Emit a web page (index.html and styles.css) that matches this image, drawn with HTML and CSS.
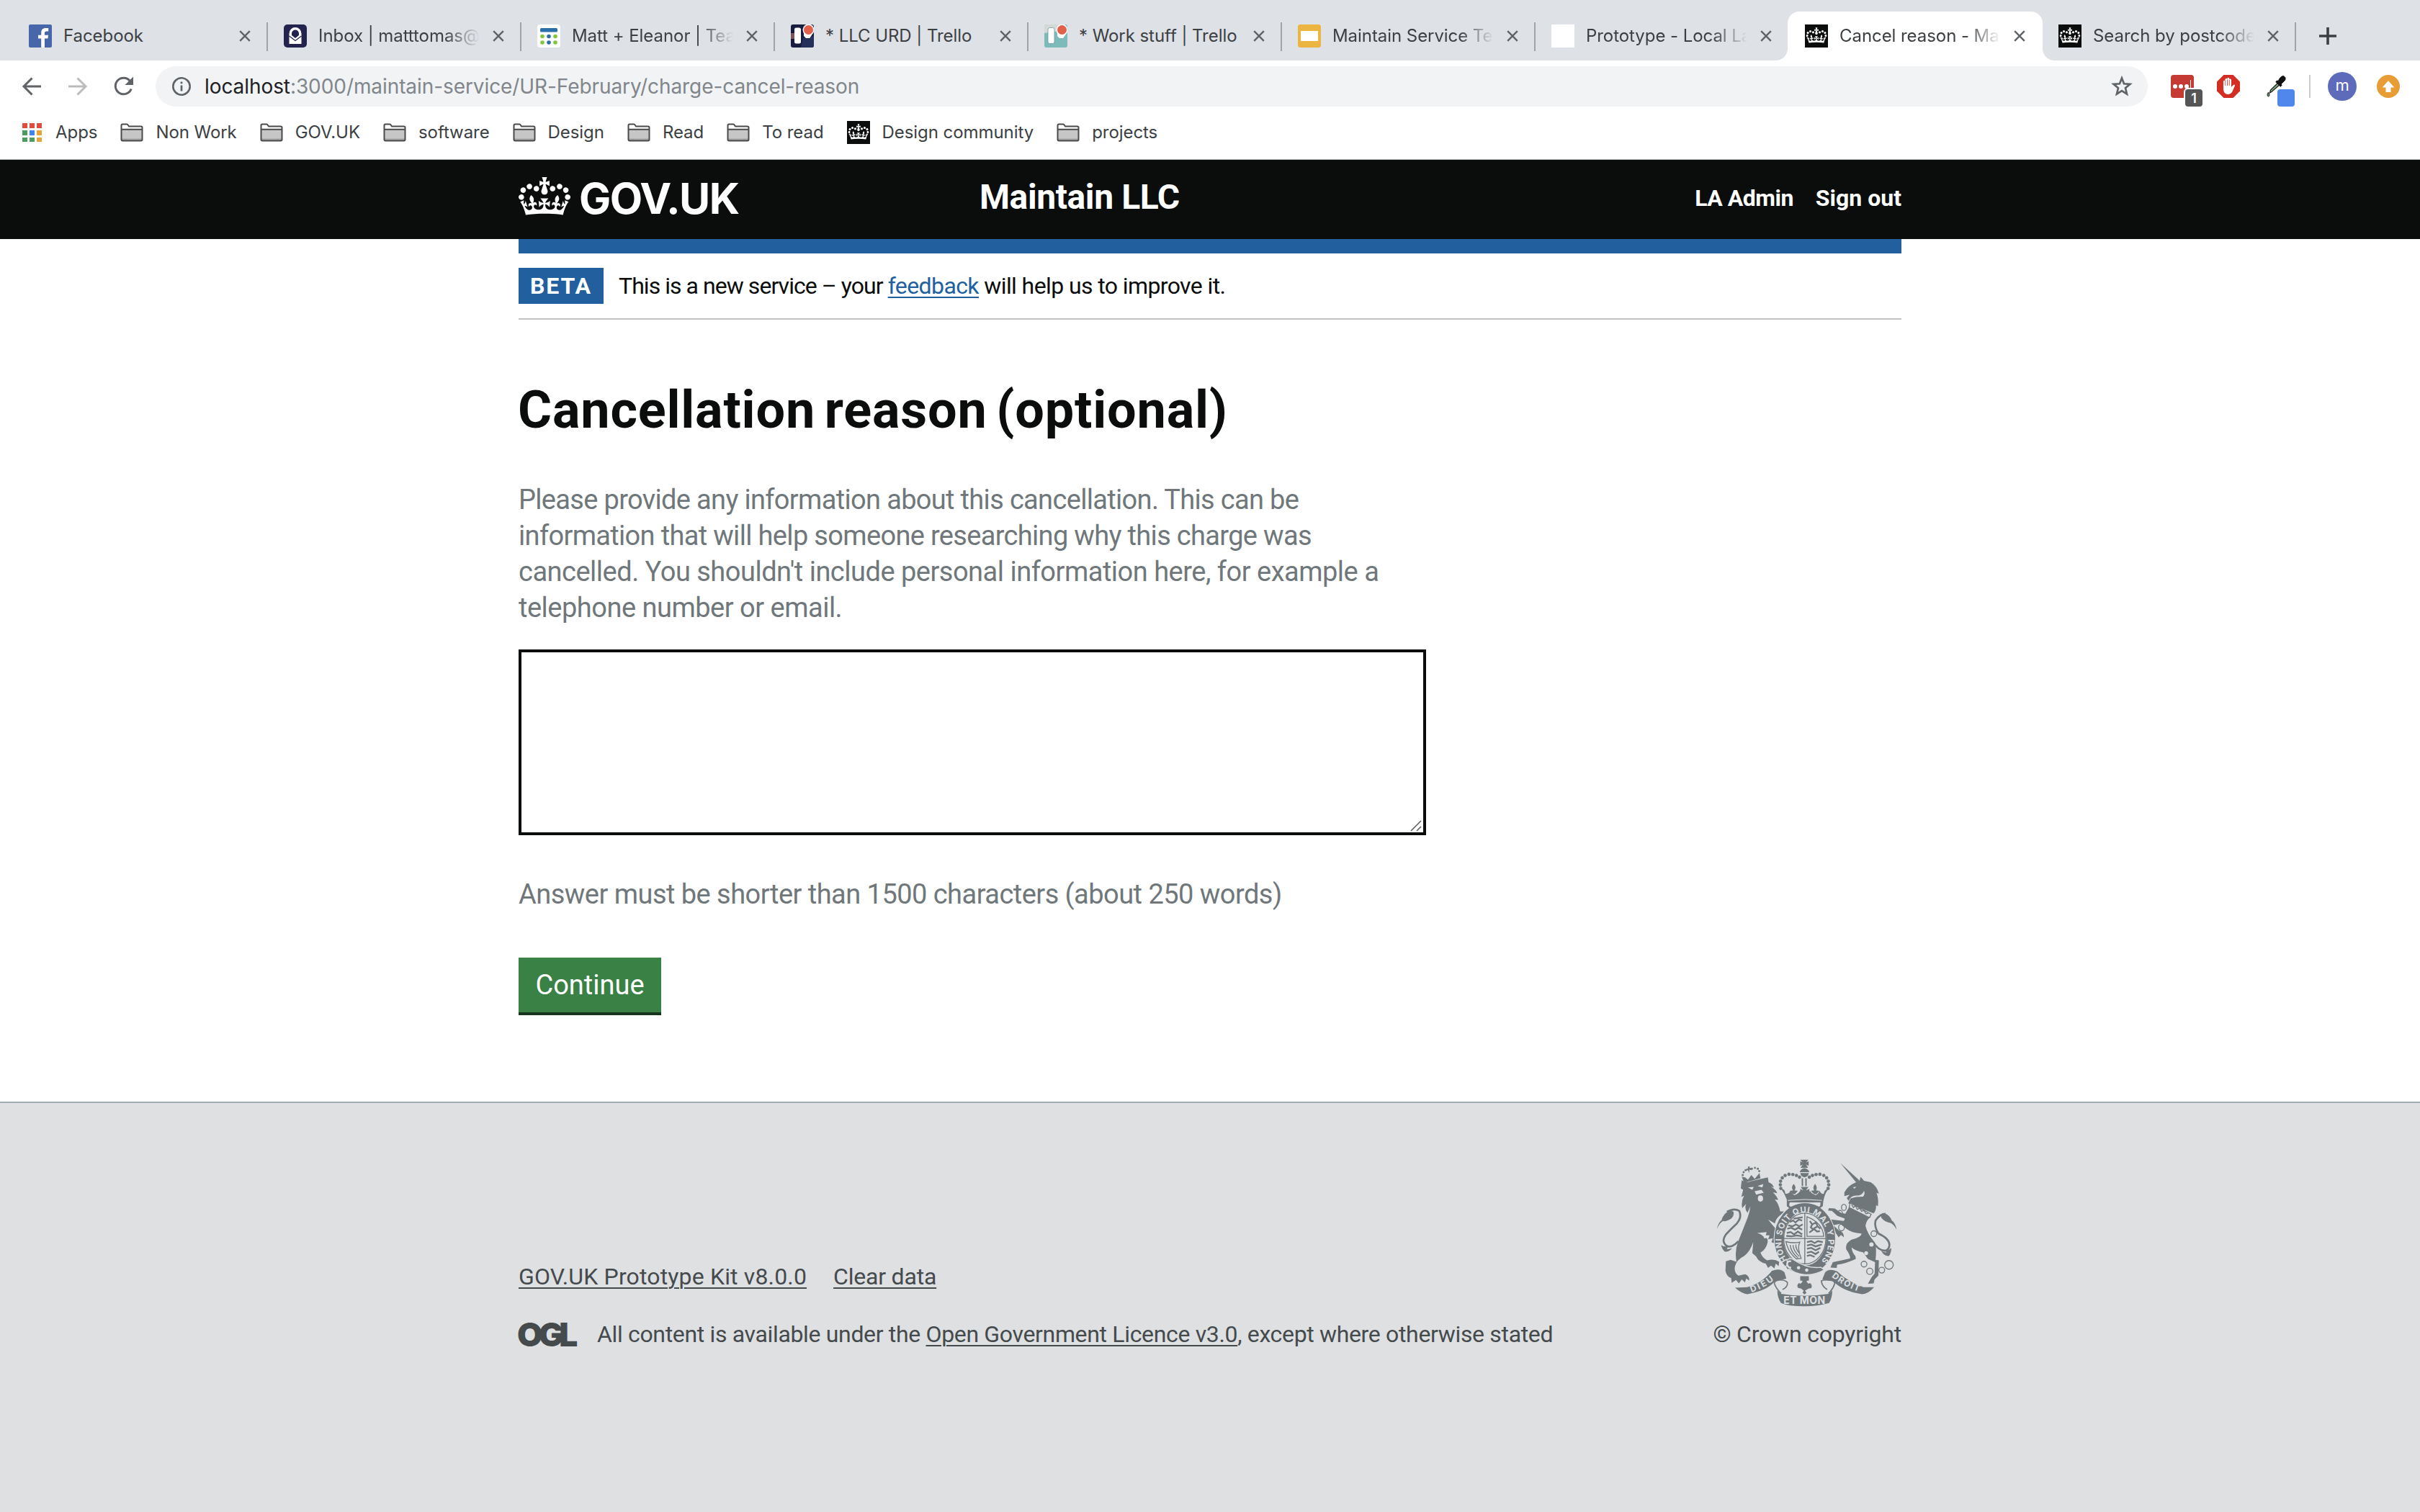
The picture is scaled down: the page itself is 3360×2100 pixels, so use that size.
FILE: index.html
```html
<!DOCTYPE html>
<html lang="en">
<head>
<meta charset="utf-8">
<title>Cancel reason - Maintain LLC</title>
<link rel="stylesheet" href="styles.css">
</head>
<body>
<svg class="defs" aria-hidden="true">
  <symbol id="close" viewBox="0 0 16 16"><path d="M1.2 1.2 14.8 14.8M14.8 1.2 1.2 14.8" stroke="currentColor" stroke-width="2.4" fill="none"/></symbol>
  <symbol id="folder" viewBox="0 0 32 26"><path d="M1.5 8V3.2Q1.5 1.5 3.2 1.5H9Q10.2 1.5 11 3L12 4.5H29Q30.5 4.5 30.5 6V8Z" fill="#fff"/><path d="M1.5 8.5H30.5V24H1.5Z" fill="#c6c6c6"/><path d="M2 21.5H30V24H2Z" fill="#a2a2a2"/><path d="M1.5 22.5V3.2Q1.5 1.5 3.2 1.5H9Q10.2 1.5 11 3L12 4.5H28.8Q30.5 4.5 30.5 6.2V22.8Q30.5 24.5 28.8 24.5H3.2Q1.5 24.5 1.5 22.5ZM1.5 8.7H30.5" fill="none" stroke="#4a4a4a" stroke-width="2"/></symbol>
  <symbol id="crown" viewBox="0 0 132 97"><path fill="currentColor" d="M25 30.2c3.5 1.5 7.7-.2 9.1-3.7 1.5-3.6-.2-7.8-3.9-9.2-3.6-1.4-7.6.3-9.1 3.9-1.4 3.5.3 7.5 3.9 9zM9 39.5c3.6 1.5 7.8-.2 9.2-3.7 1.5-3.6-.2-7.8-3.9-9.1-3.6-1.5-7.6.2-9.1 3.8-1.4 3.5.3 7.5 3.8 9zM4.4 57.2c3.5 1.5 7.7-.2 9.1-3.8 1.5-3.6-.2-7.7-3.9-9.1-3.5-1.5-7.6.3-9.1 3.8-1.4 3.5.3 7.6 3.9 9.1zm38.3-21.4c3.5 1.5 7.7-.2 9.1-3.8 1.5-3.6-.2-7.7-3.9-9.1-3.6-1.5-7.6.3-9.1 3.8-1.3 3.6.4 7.7 3.9 9.1zm64.4-5.6c-3.6 1.5-7.8-.2-9.1-3.7-1.5-3.6.2-7.8 3.8-9.2 3.6-1.4 7.7.3 9.2 3.9 1.3 3.5-.4 7.5-3.9 9zm15.9 9.3c-3.6 1.5-7.7-.2-9.1-3.7-1.5-3.6.2-7.8 3.7-9.1 3.6-1.5 7.7.2 9.2 3.8 1.5 3.5-.3 7.5-3.8 9zm4.7 17.7c-3.6 1.5-7.8-.2-9.2-3.8-1.5-3.6.2-7.7 3.9-9.1 3.6-1.5 7.7.3 9.2 3.8 1.3 3.5-.4 7.6-3.9 9.1zM89.3 35.8c-3.6 1.5-7.8-.2-9.2-3.8-1.4-3.6.2-7.7 3.9-9.1 3.6-1.5 7.7.3 9.2 3.8 1.4 3.6-.3 7.7-3.9 9.1zM69.7 17.7l8.9 4.7V9.3l-8.9 2.8c-.2-.3-.5-.6-.9-.9L72.4 0H59.6l3.5 11.2c-.3.3-.6.5-.9.9l-8.8-2.8v13.1l8.8-4.7c.3.3.6.7.9.9l-5 15.4v.1c-.2.8-.4 1.6-.4 2.4 0 4.1 3.1 7.5 7 8.1h.2c.3 0 .7.1 1 .1.4 0 .7 0 1-.1h.2c4-.6 7.1-4.1 7.1-8.1 0-.8-.1-1.7-.4-2.4V34l-5.1-15.4c.4-.2.7-.6 1-.9zM66 92.8c16.9 0 32.8 1.1 47.1 3.2 4-16.9 8.9-26.7 14-33.5l-9.6-3.4c1 4.9 1.1 7.2 0 10.2-1.5-1.4-3-4.3-4.2-8.7L108.6 76c2.8-2 5-3.2 7.5-3.3-4.4 9.4-10 11.9-13.6 11.2-4.3-.8-6.3-4.6-5.6-7.9 1-4.7 5.7-5.9 8-.5 4.3-8.7-3-11.4-7.6-8.8 7.1-7.2 7.9-13.5 2.1-21.1-8 6.1-8.1 12.3-4.5 20.8-4.7-5.4-12.1-2.5-9.5 6.2 3.4-5.2 7.9-2 7.2 3.1-.6 4.3-6.4 7.8-13.5 7.2-10.3-.9-10.9-8-11.2-13.8 2.5-.5 7.1 1.8 11 7.3L80.2 60c-4.1 4.4-8 5.3-12.3 5.4 1.4-4.4 8-11.6 8-11.6H55.5s6.4 7.2 7.9 11.6c-4.2-.1-8-1-12.3-5.4l1.4 16.4c3.9-5.5 8.5-7.7 10.9-7.3-.3 5.8-.9 12.8-11.1 13.8-7.2.6-12.9-2.9-13.5-7.2-.7-5 3.8-8.3 7.1-3.1 2.7-8.7-4.6-11.6-9.4-6.2 3.7-8.5 3.6-14.7-4.6-20.8-5.8 7.6-5 13.9 2.2 21.1-4.7-2.6-11.9.1-7.7 8.8 2.3-5.5 7.1-4.2 8.1.5.7 3.3-1.3 7.1-5.7 7.9-3.5.7-9-1.8-13.5-11.2 2.5.1 4.7 1.3 7.5 3.3l-4.7-15.4c-1.2 4.4-2.7 7.2-4.3 8.7-1.1-3-.9-5.3 0-10.2l-9.5 3.4c5 6.9 9.9 16.7 14 33.5 14.8-2.1 30.8-3.2 47.7-3.2z"/></symbol>
  <symbol id="govicon" viewBox="0 0 32 32"><path d="M0 0H32V32H0Z" fill="#0b0c0c"/><use href="#crown" x="1.5" y="4" width="29" height="22" color="#fff"/></symbol>
  <symbol id="slides" viewBox="0 0 32 32"><rect width="32" height="32" rx="3.5" fill="#ecb440"/><path d="M4 9H28V23H4Z" fill="#fff"/></symbol>
</svg>

<div class="tabs">
  <div class="tab tab-first">
    <svg class="fav" viewBox="0 0 32 32"><rect width="32" height="32" rx="2" fill="#4867aa"/><path d="M22 32V19.5H26.4L27 14.7H22V11.8C22 10.3 22.6 9.4 24.5 9.4H27.2V5.1C26.5 5 25 4.9 23.4 4.9 19.6 4.9 17.2 7 17.2 11.2V14.7H13V19.5H17.2V32Z" fill="#fff"/></svg>
    <span class="title">Facebook</span><svg class="x"><use href="#close"/></svg></div>
  <div class="tab">
    <svg class="fav" viewBox="0 0 32 32"><rect width="32" height="32" rx="5" fill="#23244d"/><path d="M7.5 15V12.5A8.5 8.5 0 0 1 24.5 12.5V27H7.5Z" fill="#fff"/><path d="M11 15V12.5A5 5 0 0 1 21 12.5V15L16 19Z" fill="#23244d"/><path d="M7.5 16 16 22.5 24.5 16" fill="none" stroke="#23244d" stroke-width="1.2"/></svg>
    <span class="title fade">Inbox | matttomas@</span><svg class="x"><use href="#close"/></svg></div>
  <div class="tab">
    <svg class="fav" viewBox="0 0 32 32"><rect width="32" height="32" rx="4" fill="#fff"/><rect x="4" y="5" width="24" height="5.5" rx="1.5" fill="#2d6fad"/><g fill="#82c43c"><circle cx="7" cy="16.5" r="2.8"/><circle cx="25" cy="16.5" r="2.8"/><circle cx="7" cy="25" r="2.8"/><circle cx="16" cy="25" r="2.8" fill="#2d6fad"/><circle cx="16" cy="16.5" r="2.8" fill="#2d6fad"/><circle cx="25" cy="25" r="2.8"/></g></svg>
    <span class="title fade">Matt + Eleanor | Tea</span><svg class="x"><use href="#close"/></svg></div>
  <div class="tab">
    <svg class="fav" viewBox="0 0 32 32"><rect width="32" height="32" rx="3" fill="#171d3f"/><path d="M0 12H14V20H0Z" fill="#7d5558"/><path d="M14 32 17 19 32 16V29Q32 32 29 32Z" fill="#25305a"/><rect x="5" y="4.500" width="9" height="22" rx="2.500" fill="#fff"/><path d="M18 10H29V15L26 19H21L18 16Z" fill="#fff"/><circle cx="24.500" cy="7.500" r="8" fill="#fff"/><circle cx="24.500" cy="7.500" r="6.500" fill="#e0604c"/></svg>
    <span class="title">* LLC URD | Trello</span><svg class="x"><use href="#close"/></svg></div>
  <div class="tab">
    <svg class="fav" viewBox="0 0 32 32"><rect width="32" height="32" rx="3" fill="#7fbaba"/><path d="M0 3Q0 0 3 0H29V8L0 12Z" fill="#d5d9d6"/><rect x="5" y="4.500" width="9" height="22" rx="2.500" fill="#fff" stroke="#6a9c9c" stroke-width=".8"/><path d="M18 10H29V15L26 19H21L18 16Z" fill="#fff"/><circle cx="24.500" cy="7.500" r="8" fill="#fff"/><circle cx="24.500" cy="7.500" r="6.500" fill="#e0604c"/></svg>
    <span class="title">* Work stuff | Trello</span><svg class="x"><use href="#close"/></svg></div>
  <div class="tab"><svg class="fav"><use href="#slides"/></svg><span class="title fade">Maintain Service Te</span><svg class="x"><use href="#close"/></svg></div>
  <div class="tab before-active"><span class="fav blank"></span><span class="title fade">Prototype - Local La</span><svg class="x"><use href="#close"/></svg></div>
  <div class="tab active"><svg class="fav"><use href="#govicon"/></svg><span class="title fade">Cancel reason - Mai</span><svg class="x"><use href="#close"/></svg></div>
  <div class="tab"><svg class="fav"><use href="#govicon"/></svg><span class="title fade">Search by postcode</span><svg class="x"><use href="#close"/></svg></div>
  <svg class="plus" viewBox="0 0 24 24"><path d="M12 0V24M0 12H24" stroke="#3c4043" stroke-width="3.600"/></svg>
</div>

<div class="toolbar">
  <svg class="nav" viewBox="0 0 28 28"><path d="M27 14H3M14.500 2.500 3 14 14.500 25.500" fill="none" stroke="#5f6368" stroke-width="3"/></svg>
  <svg class="nav" viewBox="0 0 28 28"><path d="M1 14H25M13.500 2.500 25 14 13.500 25.500" fill="none" stroke="#babcbe" stroke-width="3"/></svg>
  <svg class="nav" viewBox="0 0 28 28"><path d="M24.200 17.500A11.300 11.300 0 1 1 22.500 6.500" fill="none" stroke="#5f6368" stroke-width="3"/><path d="M27 .5V12H15.500Z" fill="#5f6368"/></svg>
  <div class="omnibox">
    <svg class="info" viewBox="0 0 26 26"><circle cx="13" cy="13" r="11.700" fill="none" stroke="#5f6368" stroke-width="2.600"/><path d="M13 11.500V19.500M13 6.500V9.200" stroke="#5f6368" stroke-width="2.700"/></svg>
    <span class="url"><b>localhost</b>:3000/maintain-service/UR-February/charge-cancel-reason</span>
    <svg class="star" viewBox="0 0 30 30"><path d="M15 3.500 18 11.300 26.400 11.900 20 17.200 22 25.600 15 21 8 25.600 10 17.200 3.600 11.900 12 11.300Z" fill="none" stroke="#5f6368" stroke-width="2.700"/></svg>
  </div>
  <div class="exts">
    <span class="ext pass"><i></i><i></i><i></i><em></em><span class="badge">1</span></span>
    <svg class="ext" viewBox="0 0 32 32"><path d="M9.500 0H22.500L32 9.500V22.500L22.500 32H9.500L0 22.500V9.500Z" fill="#d32d24"/><path d="M9 8.500Q10.500 7 11.500 8.500V6Q13 3.500 14.500 6V5Q16 2.500 17.300 5V6.500Q19 4.500 20 7V17Q22 14.500 23.500 13.500 25.500 13 25 15L21.500 23Q19.500 27 15 27 9.500 26.500 9 20Z" fill="#fff"/><path d="M11.700 8V15M14.500 6.500V15M17.300 7V15" stroke="#d32d24" stroke-width=".8"/></svg>
    <span class="ext dropper"><svg viewBox="0 0 32 32"><path d="M17.500 10.500 20 13 8 23.500 5.500 25 6.500 21Z" fill="#7aa880" stroke="#222" stroke-width="1.300"/><path d="M14.500 8.500 21.500 15.500" stroke="#111" stroke-width="3.500"/><path d="M17 9Q20 2 24 1.500 28.500 3 26.500 7.500L21 13Z" fill="#111" stroke="#111"/><path d="M3.500 24Q6.500 29 3.500 30 .5 29 3.500 24Z" fill="#5d8a63" stroke="#222"/></svg><span class="swatch"></span></span>
    <span class="rule"></span>
    <span class="avatar">m</span>
    <svg class="ext" viewBox="0 0 32 32"><circle cx="16" cy="16" r="16" fill="#e89c35"/><path d="M16 8 24.300 17.500H19.500V24H12.500V17.500H7.700Z" fill="#fff"/></svg>
  </div>
</div>

<div class="bookmarks">
  <span class="bm apps"><svg viewBox="0 0 27 26"><g fill="#e04b3d"><path d="M0 0H7V7H0ZM10 0H17V7H10ZM20 0H27V7H20Z"/></g><path d="M0 10H7V17H0ZM0 20H7V26H0ZM10 20H17V26H10Z" fill="#4d9b5f"/><path d="M10 10H17V17H10Z" fill="#3f83ee"/><path d="M20 10H27V17H20ZM20 20H27V26H20Z" fill="#e5a53b"/></svg>Apps</span>
  <span class="bm"><svg><use href="#folder"/></svg>Non Work</span>
  <span class="bm"><svg><use href="#folder"/></svg>GOV.UK</span>
  <span class="bm"><svg><use href="#folder"/></svg>software</span>
  <span class="bm"><svg><use href="#folder"/></svg>Design</span>
  <span class="bm"><svg><use href="#folder"/></svg>Read</span>
  <span class="bm"><svg><use href="#folder"/></svg>To read</span>
  <span class="bm site"><svg><use href="#govicon"/></svg>Design community</span>
  <span class="bm"><svg><use href="#folder"/></svg>projects</span>
</div>

<header class="header">
  <div class="wrap header-row">
    <a class="logo"><svg><use href="#crown"/></svg><span>GOV.UK</span></a>
    <span class="service">Maintain LLC</span>
    <nav class="account"><a class="admin">LA Admin</a><a>Sign out</a></nav>
  </div>
</header>

<div class="wrap main">
  <div class="phase"><strong>BETA</strong><span><span class="phase-lead">This is a new service – your </span><a>feedback</a> will help us to improve it.</span></div>
  <h1>Cancellation reason (optional)</h1>
  <p class="hint">Please provide any information about this cancellation. This can be<br>information that will help someone researching why this charge was<br><span class="loose">cancelled. You shouldn't include personal information here, for example a</span><br><span class="loose">telephone number or email.</span></p>
  <div class="textarea"><svg viewBox="0 0 18 18"><path d="M1 16 15 2M9 16 15 10" stroke="#5a5a5a" stroke-width="1.500"/></svg></div>
  <p class="limit">Answer must be shorter than 1500 characters (about 250 words)</p>
  <button class="continue">Continue</button>
</div>

<footer class="footer">
  <div class="wrap footer-row">
    <div class="meta">
      <div class="links"><a>GOV.UK Prototype Kit v8.0.0</a><a class="clear">Clear data</a></div>
      <div class="licence"><span class="ogl">OGL</span><span>All content is available under the <a>Open Government Licence v3.0</a>, except where otherwise stated</span></div>
    </div>
    <div class="copyright">
      <svg class="crest" viewBox="130 95 754 614">
        <defs>
          <path id="garter" d="M430 520A98 119 0 1 1 568 520"/>
          <path id="dieu" d="M276 650Q335 630 378 592"/>
          <path id="droit" d="M610 584Q660 626 730 648"/>
        </defs>
        <g fill="#6f777b">
          <!-- lion -->
          <path d="M236 182Q255 195 275 186L345 170 348 190Q365 196 370 212L358 208Q380 222 384 236L366 232Q384 250 388 264L374 262Q392 282 396 312L412 312 404 322Q378 340 374 362L346 346Q376 386 404 410L404 452Q396 440 390 444L378 460 376 446 360 440 366 424 346 428 352 412 336 412 340 398 300 402Q326 408 330 425 346 418 344 440 338 470 314 484 322 506 342 516 372 508 392 522L390 540 378 530 372 550 358 538 346 548 336 530Q306 524 296 500L280 486 284 440Q270 480 246 498 214 514 208 540 202 566 222 580L250 574Q268 580 268 600L254 592 250 608 236 596 224 612 212 598 194 610 192 590Q174 586 168 560L170 520 190 514 214 522Q206 476 220 440L260 340Q270 314 272 290L260 318Q246 300 254 280L238 298Q232 270 246 246L234 252 242 222 232 216Z"/>
          <path d="M246 192 236 168 250 170 262 180 276 160 290 176 310 152 314 174 248 192Z"/>
          <g><circle cx="240" cy="160" r="4.500"/><circle cx="244" cy="148" r="4.500"/><circle cx="252" cy="140" r="4.500"/><circle cx="278" cy="134" r="4.500"/><circle cx="291" cy="130" r="4.500"/><circle cx="303" cy="134" r="4.500"/><circle cx="309" cy="144" r="4.500"/></g>
          <path d="M261 126 270 124 268 131 276 130 277 140 268 138 267 153 262 139 256 142 255 133 263 133Z"/>
          <path d="M132 386Q138 360 152 348 158 324 180 312 194 306 202 314 206 334 186 346 168 356 158 352 142 362 132 386Z"/>
          <path d="M150 452Q162 462 180 456L174 470 196 466Q182 482 166 480 154 470 150 452Z"/>
          <!-- unicorn -->
          <path d="M647 110 726 182 714 192Z"/>
          <path d="M664 232Q680 204 710 192L728 182 732 168 746 184 774 190Q800 206 808 238L798 234Q808 262 804 290L796 286Q798 306 786 320L680 278 690 258 712 252 742 250Q752 240 746 226 738 246 716 246 692 244 682 268L674 256 686 242 664 248Z"/>
          <path d="M686 290 774 336Q756 346 752 372 760 406 790 440 800 460 794 514L808 516 806 580 790 596 786 612 762 614 778 586 790 572 792 524 762 510 742 482Q712 478 694 462 696 484 710 498L712 510Q670 530 634 534L632 548 606 546 616 524Q656 516 688 508 690 496 672 470 666 446 694 430 734 420 736 404 694 402 672 384L646 364 618 370 642 392Q662 396 662 420L650 410 640 420 630 404 606 374 608 346 662 352 666 342 634 330 612 310 596 308 600 298 624 300 650 318 668 322Z"/>
          <path d="M882 388Q876 358 862 350 854 328 832 320 812 320 818 338 832 356 856 360 870 366 882 388Z"/>
          <path d="M860 464Q848 476 836 474L838 484 818 478Q832 500 850 498 860 484 860 464Z"/>
        </g>
        <g fill="none" stroke="#6f777b" stroke-width="8">
          <path d="M174 314Q204 296 226 310 238 336 216 362 186 390 170 408 154 432 164 446 174 464 196 456 210 450 222 436"/>
          <path d="M836 322Q812 322 794 350 788 376 806 404 850 424 852 450 852 472 834 476 806 476 784 440"/>
          <g stroke-width="4"><ellipse cx="662" cy="295" rx="10" ry="13"/><ellipse cx="646" cy="320" rx="10" ry="12"/><ellipse cx="652" cy="379" rx="12" ry="14"/><circle cx="746" cy="532" r="12"/><circle cx="770" cy="562" r="13"/><circle cx="820" cy="557" r="12"/><circle cx="850" cy="535" r="18"/><circle cx="787" cy="405" r="12"/></g>
        </g>
        <g fill="#dee0e2"><circle cx="777" cy="450" r="9"/><circle cx="755" cy="486" r="8"/><ellipse cx="314" cy="258" rx="11" ry="13"/><path d="M262 212 286 210 280 222ZM302 206 326 198 322 212ZM290 228 318 222 328 234 296 242ZM700 211 714 209 706 217Z"/></g>
        <path d="M688 276 776 324 768 338 684 296Z" fill="#dee0e2" stroke="#6f777b" stroke-width="4"/>
        <path d="M694 284 702 296 710 288 718 304 728 298 736 312 746 308 754 322 764 320" fill="none" stroke="#6f777b" stroke-width="4"/>
        <!-- shield and garter -->
        <ellipse cx="499" cy="426" rx="130" ry="152" fill="#dee0e2"/>
        <ellipse cx="499" cy="426" rx="108" ry="130" fill="none" stroke="#6f777b" stroke-width="37"/>
        <path d="M411 425A88 106 0 0 1 587 425 88 106 0 0 1 411 425ZM499 320V530M411 425H587" fill="#dee0e2" stroke="#6f777b" stroke-width="4"/>
        <g fill="none" stroke="#6f777b" stroke-width="7"><path d="M436 356 450 350 460 358 474 346 488 350M430 370 448 374 462 366 476 374 490 366M426 384 442 380 458 388 472 380 488 388M424 402 440 398 454 408 470 396 488 408M422 414 444 416 466 412 488 416M452 342 490 336M508 440 526 436 540 444 554 436 574 440M508 454 526 450 544 458 570 450M508 468 526 464 544 474 564 464M508 484 526 480 544 490 558 480M508 498 522 494 540 502"/></g>
        <path d="M508 334V416H578Q574 360 508 334Z" fill="none" stroke="#6f777b" stroke-width="4"/>
        <path d="M520 352 530 366 524 378 534 388 518 400M530 366 546 358 552 374 536 384 550 396 562 394M552 374 564 384" fill="none" stroke="#6f777b" stroke-width="7"/>
        <path d="M420 438Q452 446 478 440 466 464 484 508L464 510Q434 486 424 452ZM438 452Q440 480 470 506M450 452Q450 474 476 500M462 450Q460 468 476 486" fill="none" stroke="#6f777b" stroke-width="4"/>
        <text class="crest-text ring"><textPath href="#garter" textLength="540" startOffset="6">HONI SOIT QUI MAL Y PENSE</textPath></text>
        <path d="M424 514Q440 502 456 516 510 552 566 545L580 556Q540 578 500 576 456 572 438 552 422 560 420 542 430 530 424 514Z" fill="#6f777b" stroke="#dee0e2" stroke-width="4"/>
        <path d="M442 520Q424 516 426 534 428 548 442 546" fill="none" stroke="#dee0e2" stroke-width="7"/>
        <circle cx="473" cy="547" r="7" fill="#dee0e2"/><circle cx="507" cy="557" r="7" fill="#dee0e2"/>
        <!-- imperial crown -->
        <path d="M424 290V262Q414 236 402 220 414 214 418 238 432 240 440 226 444 240 456 244 470 240 480 226L486 240 500 232 514 240 520 226Q530 240 544 244 556 240 560 226 570 242 578 238 582 218 596 220 576 246 574 290L560 300Q500 266 436 300Z" fill="#6f777b"/>
        <path d="M436 274H564Q566 290 558 292 500 262 442 292 430 292 436 274Z" fill="#dee0e2"/>
        <path d="M428 266Q500 258 570 266" fill="none" stroke="#dee0e2" stroke-width="3"/>
        <g fill="#6f777b"><circle cx="399" cy="216" r="7"/><circle cx="397" cy="201" r="7"/><circle cx="398" cy="186" r="7"/><circle cx="405" cy="172" r="7"/><circle cx="417" cy="162" r="7"/><circle cx="433" cy="157" r="7"/><circle cx="449" cy="158" r="7"/><circle cx="464" cy="162" r="7"/><circle cx="477" cy="169" r="7"/><circle cx="518" cy="169" r="7"/><circle cx="531" cy="162" r="7"/><circle cx="546" cy="158" r="7"/><circle cx="562" cy="157" r="7"/><circle cx="578" cy="162" r="7"/><circle cx="590" cy="172" r="7"/><circle cx="597" cy="186" r="7"/><circle cx="599" cy="201" r="7"/><circle cx="596" cy="216" r="7"/>
          <path d="M480 96H514L504 108 515 102V122L504 116 513 130H481L491 116 480 122V102L490 108ZM478 148Q482 134 497 132 514 134 518 148ZM480 152H516Q512 168 498 170 484 168 480 152ZM486 174H492V206H486ZM501 174H507V206H501ZM482 210H514L504 224 518 218V240H480V218L492 224ZM453 197Q466 214 456 224L470 226 458 240H448L436 226 450 224Q440 212 453 197ZM542 197Q554 214 546 224L560 226 548 240H538L524 226 538 224Q530 212 542 197Z"/>
          <!-- scrolls -->
          <path d="M208 630 258 628Q320 612 362 560 396 546 414 566L422 592 372 606Q340 642 260 657 238 656 208 630Z"/>
          <path d="M788 628 744 628Q678 606 634 562 600 548 584 566L572 596 618 604Q660 646 738 657 764 656 788 628Z"/>
          <path d="M384 642 400 656Q500 672 598 656L614 642Q612 678 600 694 550 708 498 708 430 708 400 694 386 676 384 642Z"/>
          <path d="M480 582H516V600L506 602Q514 620 520 610 532 618 526 632L514 634 500 642 506 652 498 658 490 652 494 642 484 634 470 630Q464 616 476 610 482 620 490 602L480 600Z"/>
        </g>
        <path d="M400 654Q378 632 372 612 376 596 394 598 418 598 426 608 430 626 406 638M598 654Q618 634 624 612 620 598 602 598 578 596 568 602 570 624 592 638" fill="none" stroke="#6f777b" stroke-width="5"/>
        <text class="crest-text"><textPath href="#dieu" textLength="108">DIEU</textPath></text>
        <text class="crest-text"><textPath href="#droit" textLength="130">DROIT</textPath></text>
        <text class="crest-text mon" x="410" y="699" textLength="174">ET MON</text>
      </svg>
      <span>© Crown copyright</span>
    </div>
  </div>
</footer>
</body>
</html>
```

FILE: styles.css
```css
* { box-sizing: border-box; }
body { margin: 0; background: #fff; font-family: Roboto, "Liberation Sans", sans-serif; color: #0b0c0c; height: 2100px; display: flex; flex-direction: column; overflow: hidden; }
svg { display: block; flex: none; }
.defs { position: absolute; width: 0; height: 0; }

/* browser chrome */
.tabs, .toolbar, .bookmarks { font-family: Inter, "Liberation Sans", sans-serif; display: flex; align-items: center; letter-spacing: -.06px; flex: none; }
.tabs { height: 84px; background: #dee1e6; padding: 16px 0 0 20px; font-size: 24px; color: #3c4043; }
.tab { position: relative; display: flex; align-items: center; width: 352px; height: 68px; padding: 0 24px 0 22px; flex: none; }
.tab-first { padding-left: 20px; }
.tab::after { content: ""; position: absolute; right: 0; top: 15px; width: 2px; height: 40px; background: #a0a3a8; }
.before-active::after { display: none; }
.fav { width: 32px; height: 32px; margin-right: 16px; flex: none; }
.blank { background: #fff; }
.title { flex: 1; min-width: 0; white-space: nowrap; line-height: 32px; margin-right: 18px; }
.fade { -webkit-mask-image: linear-gradient(90deg, #000 calc(100% - 48px), transparent); mask-image: linear-gradient(90deg, #000 calc(100% - 48px), transparent); }
.x { width: 16px; height: 16px; color: #5f6368; }
.active { background: #fff; border-radius: 16px 16px 0 0; width: 354px; margin: 0 0 0 -2px; padding-left: 24px; }
.active::before, .active::after { content: ""; position: absolute; top: auto; bottom: 0; width: 16px; height: 16px; }
.active::before { left: -16px; background: radial-gradient(circle at 0 0, transparent 15.5px, #fff 16px); }
.active::after { right: -16px; background: radial-gradient(circle at 100% 0, transparent 15.5px, #fff 16px); }
.plus { width: 24px; height: 24px; margin-left: 32px; }

.toolbar { height: 72px; padding-left: 30px; }
.nav { width: 28px; height: 28px; margin-right: 36px; }
.omnibox { display: flex; align-items: center; width: 2766px; height: 56px; border-radius: 28px; background: #f1f3f4; padding: 0 21px 0 23px; margin-left: -6px; flex: none; }
.info { width: 26px; height: 26px; margin-right: 19px; }
.url { flex: 1; font-size: 28px; color: #80868b; letter-spacing: -.08px; }
.url b { font-weight: 400; color: #202124; }
.star { width: 30px; height: 30px; }
.exts { display: flex; align-items: center; margin-left: 32px; }
.ext { width: 32px; height: 32px; margin-right: 32px; position: relative; flex: none; }
.pass { background: #c53a32; border-radius: 4px; display: flex; align-items: center; gap: 2px; padding-left: 3px; }
.pass i { width: 6px; height: 6px; border-radius: 50%; background: #fff; }
.pass em { width: 1px; height: 12px; background: #fff; margin-top: -6px; }
.badge { position: absolute; left: 20px; top: 20px; width: 24px; height: 24px; border-radius: 4px; background: #555; color: #fff; font-size: 18px; font-weight: 600; line-height: 25px; text-align: center; box-shadow: 0 0 0 2px #fff; }
.dropper { margin: 0 32px 0 4px; }
.dropper svg { width: 32px; height: 32px; }
.swatch { position: absolute; left: 16px; top: 20px; width: 24px; height: 24px; border-radius: 4px; background: #5087ec; }
.rule { width: 2px; height: 32px; background: #ccc; margin: 0 24px 0 -4px; }
.avatar { width: 40px; height: 40px; border-radius: 50%; background: #5d6bba; color: #fff; font-size: 22px; line-height: 37px; text-align: center; margin-right: 28px; }

.bookmarks { height: 65px; padding: 0 0 9px 31px; gap: 32px; font-size: 24px; color: #3c4043; }
.bm { display: flex; align-items: center; gap: 17px; line-height: 32px; white-space: nowrap; }
.bm svg { width: 32px; height: 26px; }
.bm.apps { gap: 19px; }
.bm.apps svg { width: 27px; }
.bm.site svg { height: 32px; }

/* page */
.wrap { width: 1920px; margin: 0 auto; }
.header { background: #0b0c0c; height: 111px; border-top: 1px solid #b6b9ba; color: #fff; font-weight: 700; flex: none; }
.header-row { display: flex; align-items: center; height: 110px; padding-bottom: 3px; }
.logo { display: flex; align-items: center; width: 640px; }
.logo svg { width: 72px; height: 53px; margin: -6px 12px 0 0; }
.logo span { font: 700 59px/60px Inter, sans-serif; letter-spacing: -1.6px; }
.service { font-size: 48px; line-height: 56px; letter-spacing: -.4px; margin-top: -3px; }
.account { margin-left: auto; font-size: 32px; display: flex; gap: 31px; margin-top: -1px; }
.admin { letter-spacing: -.5px; }

.main { border-top: 20px solid #225f9f; flex: none; height: 1198px; }
.phase { display: flex; align-items: center; height: 92px; border-bottom: 2px solid #bfc1c3; font-size: 32px; line-height: 50px; letter-spacing: -.6px; }
.phase strong { width: 118px; height: 50px; background: #225f9f; color: #fff; text-align: center; letter-spacing: 1.9px; margin-right: 21px; }
.phase-lead { letter-spacing: -.95px; }
.phase a { color: #225f9f; text-decoration: underline; text-decoration-thickness: 2px; text-underline-offset: 4px; }
h1 { font-size: 72px; line-height: 80px; letter-spacing: .8px; word-spacing: -6px; margin: 86px 0 59px -1px; }
.hint, .limit { font-size: 38px; line-height: 50px; letter-spacing: -.67px; color: #6f777b; margin: 0; }
.loose { letter-spacing: -.5px; }
.textarea { width: 1260px; height: 258px; border: 4px solid #0b0c0c; margin: 33px 0 57px; display: flex; justify-content: flex-end; align-items: flex-end; }
.textarea svg { width: 18px; height: 18px; }
.limit { letter-spacing: -.53px; }
.continue { display: block; width: 198px; height: 80px; margin-top: 63px; padding: 0; border: 0; border-bottom: 4px solid #15331d; background: #398145; color: #fff; font: 400 38px/50px Roboto, sans-serif; }

.footer { background: #dee0e2; border-top: 2px solid #a1acb2; flex: 1; color: #454a4d; font-size: 32px; line-height: 40px; }
.footer a { text-decoration: underline; text-decoration-thickness: 2px; text-underline-offset: 4px; }
.footer-row { display: flex; justify-content: space-between; align-items: flex-end; height: 341px; }
.links { display: flex; gap: 37px; letter-spacing: .15px; margin-bottom: 40px; }
.links .clear { letter-spacing: -.2px; }
.licence { display: flex; letter-spacing: -.34px; }
.ogl { width: 108px; font: 900 46px/40px Inter, sans-serif; letter-spacing: -6px; margin-left: -2px; margin-right: 3px; }
.copyright { display: flex; flex-direction: column; align-items: flex-end; letter-spacing: -.2px; }
.crest { width: 251px; height: 205px; margin: 0 6px 18px 0; }
.crest-text { font-family: Inter, sans-serif; font-weight: 700; font-size: 36px; fill: #dee0e2; }
.ring { font-size: 34px; }
.mon { font-size: 42px; }
```
